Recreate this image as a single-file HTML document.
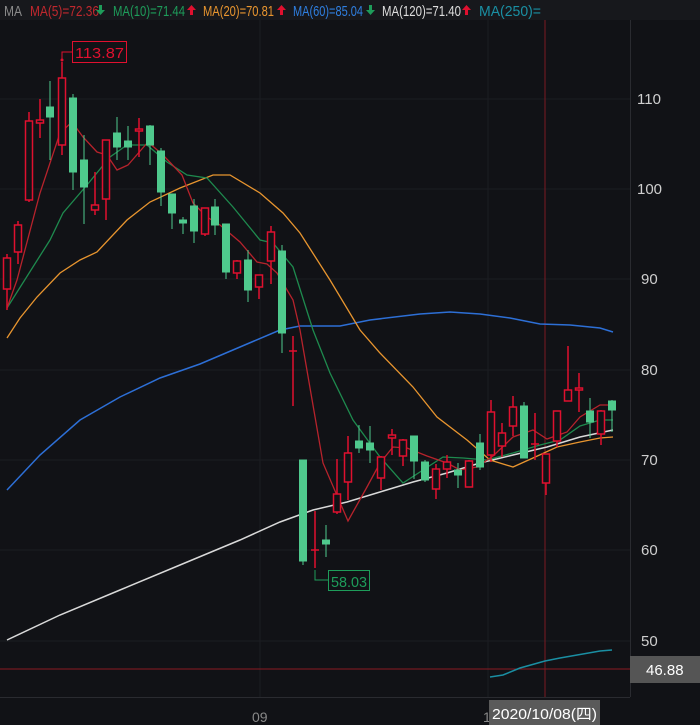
<!DOCTYPE html>
<html><head><meta charset="utf-8"><style>
html,body{margin:0;padding:0;background:#111216;width:700px;height:725px;overflow:hidden}
svg{display:block}
text{font-family:"Liberation Sans","Noto Sans CJK SC",sans-serif}
</style></head><body>
<svg width="700" height="725" viewBox="0 0 700 725" xmlns="http://www.w3.org/2000/svg">
<rect width="700" height="725" fill="#111216"/>
<rect width="700" height="20" fill="#17181c"/>
<g stroke="#1c1d22" stroke-width="1">
<line x1="0" y1="99" x2="630" y2="99"/><line x1="0" y1="189" x2="630" y2="189"/><line x1="0" y1="279" x2="630" y2="279"/><line x1="0" y1="370" x2="630" y2="370"/><line x1="0" y1="460" x2="630" y2="460"/><line x1="0" y1="550" x2="630" y2="550"/><line x1="0" y1="641" x2="630" y2="641"/>
<line x1="260" y1="20" x2="260" y2="697"/><line x1="488" y1="20" x2="488" y2="697"/>
</g>
<line x1="630.5" y1="20" x2="630.5" y2="697" stroke="#2a2b30"/>
<line x1="0" y1="697.5" x2="630" y2="697.5" stroke="#2a2b30"/>
<line x1="545" y1="20" x2="545" y2="697" stroke="#7a1a22" stroke-width="1"/>
<line x1="0" y1="669" x2="630" y2="669" stroke="#8a1a22" stroke-width="1"/>
<g font-size="15" fill="#cfcfcf">
<text x="637" y="104">110</text><text x="637" y="194">100</text><text x="641" y="284">90</text><text x="641" y="375">80</text><text x="641" y="465">70</text><text x="641" y="555">60</text><text x="641" y="646">50</text>
</g>
<polyline fill="none" stroke="#2d6fd6" stroke-width="1.5" points="7,490 40,455 80,420 120,397 160,378 200,364 240,347 280,330 300,326 340,326 370,320 420,314 450,312 480,314 510,318 540,324 570,325 600,328 613,332"/>
<polyline fill="none" stroke="#d9d9d9" stroke-width="1.5" points="7,640 60,615 120,590 180,565 240,540 280,522 313,510 347,502 380,492 413,482 447,473 480,463 513,455 547,447 580,437 613,430"/>
<polyline fill="none" stroke="#e8952f" stroke-width="1.3" points="7,338 20,318 37,297 60,273 80,260 97,252 127,220 150,202 180,188 213,175 230,175 260,193 283,213 300,233 330,280 360,330 380,353 413,387 437,417 467,440 490,460 513,467 533,458 557,447 580,442 600,438 613,437"/>
<polyline fill="none" stroke="#1e8a4e" stroke-width="1.3" points="7,308 50,240 63,213 87,185 110,157 127,145 147,145 167,162 187,175 207,178 233,207 260,240 273,243 293,267 313,330 330,373 353,420 380,457 403,483 423,470 443,457 463,458 487,460 513,453 540,445 560,440 580,426 600,420 613,420"/>
<polyline fill="none" stroke="#b7232c" stroke-width="1.3" points="7,308 17,280 40,193 60,133 72,122 83,137 97,152 107,155 117,170 128,165 148,142 163,155 182,175 193,203 207,217 220,225 240,242 257,262 267,264 277,273 293,300 300,330 323,463 348,521 367,487 380,463 393,447 407,448 427,456 447,463 460,470 477,467 493,456 513,437 533,430 547,439 567,432 580,417 600,405 613,405"/>
<polyline fill="none" stroke="#1a8fa3" stroke-width="1.5" points="490,677 503,675 520,668 545,661 560,658 600,651 612,650"/>
<g stroke="#4fc98d" fill="#4fc98d" stroke-width="1">
<line x1="50" y1="81" x2="50" y2="160"/><rect x="46.5" y="107" width="7" height="10"/>
<line x1="73" y1="94" x2="73" y2="190"/><rect x="69.5" y="98" width="7" height="74"/>
<line x1="84" y1="135" x2="84" y2="224"/><rect x="80.5" y="160" width="7" height="27"/>
<line x1="117" y1="117" x2="117" y2="160"/><rect x="113.5" y="133" width="7" height="14"/>
<line x1="128" y1="126" x2="128" y2="160"/><rect x="124.5" y="141" width="7" height="6"/>
<line x1="150" y1="125" x2="150" y2="165"/><rect x="146.5" y="126" width="7" height="19"/>
<line x1="161" y1="148" x2="161" y2="206"/><rect x="157.5" y="151" width="7" height="41"/>
<line x1="172" y1="194" x2="172" y2="229"/><rect x="168.5" y="194" width="7" height="19"/>
<line x1="183" y1="217" x2="183" y2="234"/><rect x="179.5" y="220" width="7" height="3"/>
<line x1="194" y1="199" x2="194" y2="243"/><rect x="190.5" y="206" width="7" height="25"/>
<line x1="215" y1="199" x2="215" y2="235"/><rect x="211.5" y="207" width="7" height="18"/>
<line x1="226" y1="224" x2="226" y2="279"/><rect x="222.5" y="224" width="7" height="48"/>
<line x1="248" y1="250" x2="248" y2="302"/><rect x="244.5" y="260" width="7" height="30"/>
<line x1="282" y1="245" x2="282" y2="353"/><rect x="278.5" y="251" width="7" height="82"/>
<line x1="303" y1="460" x2="303" y2="565"/><rect x="299.5" y="460" width="7" height="101"/>
<line x1="326" y1="525" x2="326" y2="557"/><rect x="322.5" y="540" width="7" height="4"/>
<line x1="359" y1="425" x2="359" y2="453"/><rect x="355.5" y="441" width="7" height="7"/>
<line x1="370" y1="426" x2="370" y2="463"/><rect x="366.5" y="443" width="7" height="7"/>
<line x1="414" y1="436" x2="414" y2="479"/><rect x="410.5" y="436" width="7" height="25"/>
<line x1="425" y1="460" x2="425" y2="482"/><rect x="421.5" y="462" width="7" height="18"/>
<line x1="458" y1="463" x2="458" y2="488"/><rect x="454.5" y="470" width="7" height="5"/>
<line x1="480" y1="434" x2="480" y2="470"/><rect x="476.5" y="443" width="7" height="24"/>
<line x1="524" y1="402" x2="524" y2="458"/><rect x="520.5" y="406" width="7" height="52"/>
<line x1="590" y1="398" x2="590" y2="438"/><rect x="586.5" y="411" width="7" height="11"/>
<line x1="612" y1="400" x2="612" y2="432"/><rect x="608.5" y="401" width="7" height="9"/>
</g>
<g stroke="#e0102f" fill="#111216" stroke-width="1.5">
<line x1="7" y1="254" x2="7" y2="310"/><rect x="3.5" y="258" width="7" height="31"/>
<line x1="18" y1="221" x2="18" y2="264"/><rect x="14.5" y="225" width="7" height="27"/>
<line x1="29" y1="112" x2="29" y2="202"/><rect x="25.5" y="121" width="7" height="79"/>
<line x1="40" y1="99" x2="40" y2="138"/><rect x="36.5" y="120" width="7" height="3"/>
<line x1="62" y1="62" x2="62" y2="155"/><rect x="58.5" y="78" width="7" height="67"/>
<line x1="95" y1="172" x2="95" y2="215"/><rect x="91.5" y="205" width="7" height="5"/>
<line x1="106" y1="140" x2="106" y2="220"/><rect x="102.5" y="140" width="7" height="59"/>
<line x1="139" y1="118" x2="139" y2="157"/><rect x="135.5" y="129" width="7" height="2"/>
<line x1="205" y1="208" x2="205" y2="236"/><rect x="201.5" y="208" width="7" height="26"/>
<line x1="237" y1="260" x2="237" y2="279"/><rect x="233.5" y="261" width="7" height="12"/>
<line x1="259" y1="275" x2="259" y2="299"/><rect x="255.5" y="275" width="7" height="12"/>
<line x1="271" y1="226" x2="271" y2="284"/><rect x="267.5" y="232" width="7" height="29"/>
<line x1="293" y1="336" x2="293" y2="406"/><line x1="289" y1="351" x2="297" y2="351"/>
<line x1="315" y1="511" x2="315" y2="568"/><line x1="311" y1="550" x2="319" y2="550"/>
<line x1="337" y1="459" x2="337" y2="514"/><rect x="333.5" y="494" width="7" height="18"/>
<line x1="348" y1="436" x2="348" y2="500"/><rect x="344.5" y="453" width="7" height="29"/>
<line x1="381" y1="456" x2="381" y2="490"/><rect x="377.5" y="457" width="7" height="21"/>
<line x1="392" y1="429" x2="392" y2="455"/><rect x="388.5" y="435" width="7" height="3"/>
<line x1="403" y1="439" x2="403" y2="466"/><rect x="399.5" y="440" width="7" height="16"/>
<line x1="436" y1="464" x2="436" y2="499"/><rect x="432.5" y="469" width="7" height="20"/>
<line x1="447" y1="455" x2="447" y2="478"/><rect x="443.5" y="462" width="7" height="7"/>
<line x1="469" y1="460" x2="469" y2="487"/><rect x="465.5" y="461" width="7" height="26"/>
<line x1="491" y1="400" x2="491" y2="462"/><rect x="487.5" y="412" width="7" height="43"/>
<line x1="502" y1="423" x2="502" y2="457"/><rect x="498.5" y="433" width="7" height="13"/>
<line x1="513" y1="396" x2="513" y2="436"/><rect x="509.5" y="407" width="7" height="19"/>
<line x1="535" y1="413" x2="535" y2="460"/><line x1="531" y1="444" x2="539" y2="444"/>
<line x1="546" y1="454" x2="546" y2="495"/><rect x="542.5" y="454" width="7" height="29"/>
<line x1="557" y1="411" x2="557" y2="447"/><rect x="553.5" y="411" width="7" height="30"/>
<line x1="568" y1="346" x2="568" y2="401"/><rect x="564.5" y="390" width="7" height="11"/>
<line x1="579" y1="373" x2="579" y2="412"/><rect x="575.5" y="388" width="7" height="2"/>
<line x1="601" y1="410" x2="601" y2="445"/><rect x="597.5" y="411" width="7" height="23"/>
</g>
<g stroke="#e0102f" fill="none" stroke-width="1"><polyline points="62,60 62,52 72,52"/><rect x="72.5" y="41.5" width="54" height="21"/></g>
<circle cx="62" cy="60" r="1.5" fill="#e0102f"/>
<text x="75" y="58" font-size="15" fill="#e0102f" textLength="49" lengthAdjust="spacingAndGlyphs">113.87</text>
<g stroke="#1e9c5a" fill="none" stroke-width="1"><polyline points="315,570 315,580 328,580"/><rect x="328.5" y="570.5" width="41" height="20"/></g>
<text x="331" y="587" font-size="15" fill="#1e9c5a" textLength="36" lengthAdjust="spacingAndGlyphs">58.03</text>
<rect x="630" y="656" width="70" height="27" fill="#555"/>
<text x="646" y="675" font-size="15" fill="#fff">46.88</text>
<text x="252" y="722" font-size="14" fill="#888">09</text>
<text x="483" y="722" font-size="14" fill="#888">1</text>
<rect x="489" y="700" width="111" height="25" fill="#5a5a5a"/>
<text x="492" y="719" font-size="15" fill="#fff" textLength="105" lengthAdjust="spacingAndGlyphs">2020/10/08(四)</text>
<g font-size="15">
<text x="4" y="16" fill="#8a8a8a" textLength="18" lengthAdjust="spacingAndGlyphs">MA</text>
<text x="30" y="16" fill="#c0282e" textLength="69" lengthAdjust="spacingAndGlyphs">MA(5)=72.36</text>
<text x="113" y="16" fill="#1e9c5a" textLength="72" lengthAdjust="spacingAndGlyphs">MA(10)=71.44</text>
<text x="203" y="16" fill="#e8952f" textLength="71" lengthAdjust="spacingAndGlyphs">MA(20)=70.81</text>
<text x="293" y="16" fill="#2f7fe0" textLength="70" lengthAdjust="spacingAndGlyphs">MA(60)=85.04</text>
<text x="382" y="16" fill="#dddddd" textLength="79" lengthAdjust="spacingAndGlyphs">MA(120)=71.40</text>
<text x="479" y="16" fill="#1a8fa3" textLength="62" lengthAdjust="spacingAndGlyphs">MA(250)=</text>
</g>
<!-- arrows -->
<path d="M99,5 h3 v5 h3 l-4.5,5 l-4.5,-5 h3 z" fill="#1e9c5a"/>
<path d="M190,15 h3 v-5 h3 l-4.5,-5 l-4.5,5 h3 z" fill="#e0102f"/>
<path d="M280,15 h3 v-5 h3 l-4.5,-5 l-4.5,5 h3 z" fill="#e0102f"/>
<path d="M369,5 h3 v5 h3 l-4.5,5 l-4.5,-5 h3 z" fill="#1e9c5a"/>
<path d="M465,15 h3 v-5 h3 l-4.5,-5 l-4.5,5 h3 z" fill="#e0102f"/>
</svg>
</body></html>
